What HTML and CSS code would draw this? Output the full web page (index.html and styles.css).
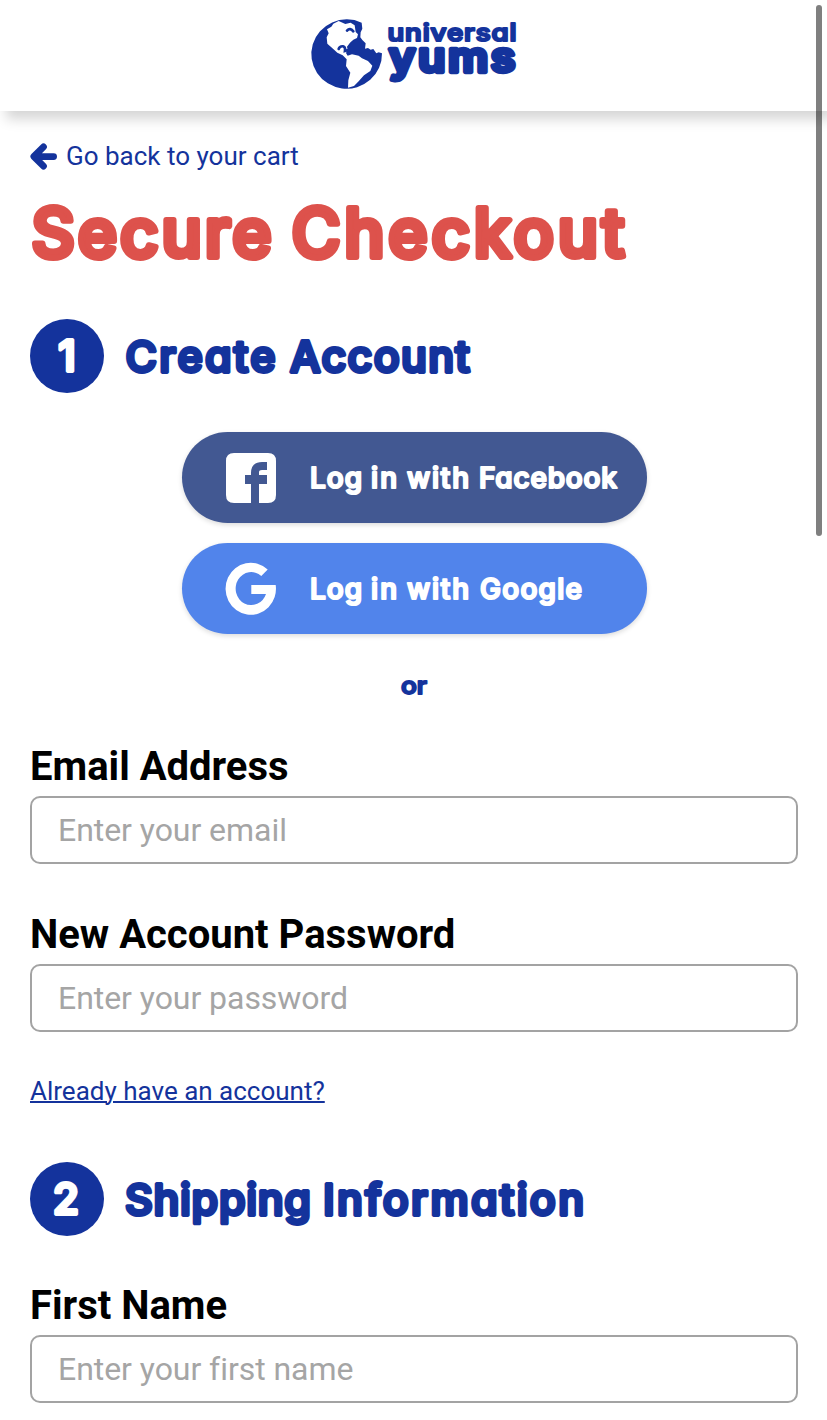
FILE: index.html
```html
<!DOCTYPE html>
<html lang="en">
<head>
<meta charset="utf-8">
<title>Secure Checkout</title>
<link rel="stylesheet" href="styles.css">
</head>
<body>
<header class="header">
<svg class="logo" viewBox="0 0 210 74" role="img" aria-label="universal yums">
<g transform="translate(-1 -1.7) scale(.3333)">
<path fill="#14339c" d="M161 22A106 104 0 1 0 222 114L212 111 205 114 196 101 188 103 180 98 171 100 173 84 163 74 157 66 158 51 163 40Z"/>
<path fill="#fff" d="M57 42L70 34 76 25 92 17 112 26 128 22 140 30 143 50 150 57 147 68 136 73 126 82 117 94 119 103 114 113 119 121 132 117 152 121 162 129 180 137 193 151 187 167 168 180 152 198 138 212 120 217 121 195 127 172 114 152 116 132 104 120 88 112 75 100 58 85 56 66 62 54Z"/>
<path fill="none" stroke="#14339c" stroke-width="8" stroke-linecap="round" d="M117 46Q126 36 136 48M92 101Q95 92 105 93Q113 95 111 107L122 104"/>
</g>
<g class="display logo-text"><text x="78.500" y="23.500" font-size="24" textLength="130" lengthAdjust="spacingAndGlyphs">universal</text><text x="80" y="55" font-size="41" textLength="129" lengthAdjust="spacingAndGlyphs">yums</text></g>
</svg>
</header>
<main class="page">
<a class="back" href="#"><svg class="arrow" viewBox="0 0 28 28"><path d="M14 4L4 14L14 24M4.500 14H24.500"/></svg>Go back to your cart</a>
<h1 class="title"><svg class="display title-art" viewBox="0 0 640 90"><text y="66" font-size="67"><tspan x="1.500" textLength="240">Secure</tspan> <tspan x="261.500" textLength="333">Checkout</tspan></text></svg></h1>
<section>
<h2 class="step"><svg class="display step-art" viewBox="0 0 600 74"><circle cx="37" cy="37" r="37"/><text class="number" x="37" y="52" font-size="42" text-anchor="middle">1</text><text y="53" font-size="43"><tspan x="95.500" textLength="150">Create</tspan> <tspan x="260" textLength="180">Account</tspan></text></svg></h2>
<div class="social">
<button class="login facebook"><svg class="display" viewBox="0 0 465 91"><path fill="#fff" d="M52 21H86Q94 21 94 29V63Q94 71 86 71H77V52H85V43H77V40Q77 38 80 38H85V30H80Q69 30 69 41V43H63V52H69V71H52Q44 71 44 63V29Q44 21 52 21Z"/><text y="55.500" font-size="28"><tspan x="128" textLength="52">Log</tspan> <tspan x="189" textLength="26">in</tspan> <tspan x="225" textLength="62">with</tspan> <tspan x="297" textLength="138">Facebook</tspan></text></svg></button>
<button class="login google"><svg class="display" viewBox="0 0 465 91"><path fill="#fff" d="M85.700 26.500A25.200 26 0 1 0 93.700 42H69.300V51H84A15.600 16.500 0 1 1 79.300 33Z"/><text y="55.500" font-size="28"><tspan x="128" textLength="52">Log</tspan> <tspan x="189" textLength="26">in</tspan> <tspan x="225" textLength="62">with</tspan> <tspan x="298" textLength="102">Google</tspan></text></svg></button>
</div>
<p class="or"><svg class="display" width="40" height="30" viewBox="0 0 40 30"><text x="7" y="21" font-size="24" textLength="26" lengthAdjust="spacingAndGlyphs">or</text></svg></p>
<label class="label" for="email">Email Address</label>
<input class="field" id="email" type="email" placeholder="Enter your email">
<label class="label second" for="password">New Account Password</label>
<input class="field" id="password" type="password" placeholder="Enter your password">
<a class="existing" href="#">Already have an account?</a>
</section>
<section>
<h2 class="step shipping"><svg class="display step-art" viewBox="0 0 600 74"><circle cx="37" cy="37" r="37"/><text class="number" x="36" y="52" font-size="42" text-anchor="middle">2</text><text y="53" font-size="43"><tspan x="95" textLength="186">Shipping</tspan> <tspan x="293" textLength="261">Information</tspan></text></svg></h2>
<label class="label" for="first">First Name</label>
<input class="field" id="first" type="text" placeholder="Enter your first name">
</section>
</main>
<div class="scrollbar"></div>
</body>
</html>
```
FILE: styles.css
```css
* { box-sizing: border-box; }
html { overflow: hidden; }
body { margin: 0; background: #fff; color: #000; font-family: Roboto, sans-serif; }
svg { display: block; flex: none; overflow: visible; }
.header { height: 111px; padding: 17px 0 0 1px; display: flex; justify-content: center; background: #fff; box-shadow: 6px 8px 12px rgba(0, 0, 0, .17); }
.logo { width: 210px; height: 74px; }
.display { font-family: Inter, sans-serif; font-weight: 500; font-feature-settings: "cv11"; fill: #14339c; stroke-linejoin: round; stroke-linecap: round; }
.display text { stroke: #14339c; stroke-width: 3.8px; }
.display.logo-text text { stroke-width: 2.2px; letter-spacing: .8px; }
.display.logo-text text + text { font-weight: 600; stroke-width: 4.5px; letter-spacing: 2.4px; }
.page { padding: 27px 29px 0 30px; }
.back { display: flex; align-items: center; gap: 9px; height: 36px; color: #14339c; font-size: 26px; text-decoration: none; }
.arrow { width: 27px; height: 27px; fill: none; stroke: #14339c; stroke-width: 7px; stroke-linecap: round; stroke-linejoin: round; }
.title { margin: 17px 0 0; height: 90px; }
.title-art { width: 640px; height: 90px; }
.title .title-art text { fill: #dd524c; stroke: #dd524c; stroke-width: 6px; }
.step { margin: 38px 0 0; height: 74px; }
.step-art { width: 600px; height: 74px; }
.step .display .number { fill: #fff; stroke: #fff; }
.social { display: flex; flex-direction: column; align-items: center; gap: 20px; margin: 39px 0 0 1px; }
.login { width: 465px; height: 91px; padding: 0; border: 0; border-radius: 46px; box-shadow: 0 2px 5px rgba(0, 0, 0, .14); }
.login svg { width: 465px; height: 91px; }
.login .display text { fill: #fff; stroke: #fff; stroke-width: 2.2px; }
.facebook { background: #425892; }
.google { background: #5184eb; }
.or { margin: 39px 0 0; display: flex; justify-content: center; }
.or .display text { stroke-width: 2px; }
.label { display: block; margin-top: 41px; height: 46px; line-height: 46px; margin-bottom: 6px; font-size: 40px; font-weight: 700; white-space: nowrap; }
.label.second { margin-top: 48px; }
.field { display: block; width: 768px; height: 68px; padding: 0 26px; border: 2px solid #a3a3a3; border-radius: 10px; background: #fff; font: 32px Roboto, sans-serif; letter-spacing: -.05px; }
.field::placeholder { color: #a5a5a5; opacity: 1; }
.existing { display: block; width: max-content; margin-top: 43px; height: 32px; line-height: 32px; font-size: 26px; color: #14339c; text-decoration-thickness: 2px; }
.shipping { margin-top: 55px; }
.shipping + .label { margin-top: 47px; }
.scrollbar { position: absolute; top: 5px; right: 5px; width: 6px; height: 531px; border-radius: 3px; background: rgba(0, 0, 0, .5); }
```
